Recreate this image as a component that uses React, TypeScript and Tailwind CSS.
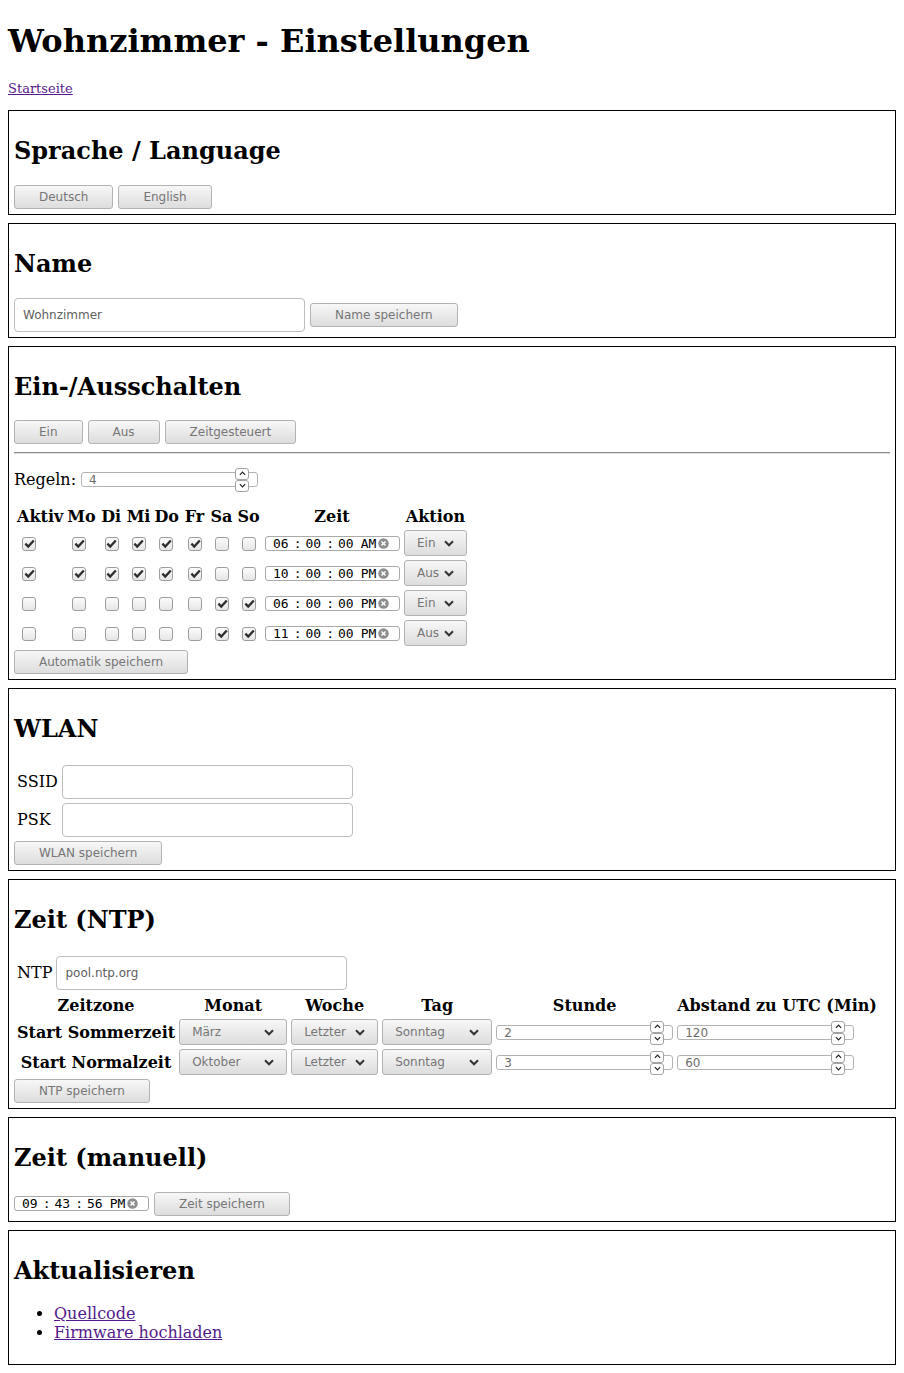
import React from "react";

const ctl = "font-['DejaVu_Sans',sans-serif] text-[12px]";

const Btn = ({ children }: { children: React.ReactNode }) => (
  <button
    className={`h-[24px] shrink-0 rounded-[3px] border border-[#b3b3b3] bg-linear-to-b from-[#f7f7f7] to-[#dddddd] px-[24px] leading-none text-[#767676] ${ctl}`}
  >
    {children}
  </button>
);

const TextInput = ({ value = "", className = "" }: { value?: string; className?: string }) => (
  <input
    readOnly
    defaultValue={value}
    className={`h-[34px] w-[291px] rounded-[4px] border border-[#bdbdbd] bg-white px-2 text-[#606060] outline-none ${ctl} ${className}`}
  />
);

const Check = ({ on }: { on: boolean }) => (
  <span className="ml-[5px] mr-[4px] inline-flex h-[14px] w-[14px] items-center justify-center rounded-[3px] border border-[#9d9d9d] bg-linear-to-b from-[#fbfbfb] to-[#e6e6e6] align-middle">
    {on && (
      <svg viewBox="0 0 12 12" width="11" height="11">
        <path d="M1.5 6.2 L4.6 9.3 L10.7 2.7" stroke="#2d2d2d" strokeWidth="2.5" fill="none" />
      </svg>
    )}
  </span>
);

const ClearIcon = () => (
  <svg viewBox="0 0 12 12" width="11" height="11" className="ml-[2px] shrink-0">
    <circle cx="6" cy="6" r="5.7" fill="#8d8d8d" />
    <path d="M3.8 3.8 L8.2 8.2 M8.2 3.8 L3.8 8.2" stroke="#ffffff" strokeWidth="1.6" />
  </svg>
);

const TimeInput = ({ t }: { t: [string, string, string, string] }) => (
  <span className="inline-flex h-[15px] w-[135px] items-center rounded-[3px] border border-[#a9a9a9] bg-white pl-[7px] align-middle font-['DejaVu_Sans_Mono',monospace] text-[13px] leading-none text-black">
    <span>{t[0]}</span>
    <span className="ml-[5px]">:</span>
    <span className="ml-[4px]">{t[1]}</span>
    <span className="ml-[5px]">:</span>
    <span className="ml-[4px]">{t[2]}</span>
    <span className="ml-[7px]">{t[3]}</span>
    <ClearIcon />
  </span>
);

const Chevron = () => (
  <svg viewBox="0 0 10 7" width="10" height="7" className="shrink-0">
    <path d="M1 1.3 L5 5.3 L9 1.3" stroke="#333333" strokeWidth="2" fill="none" />
  </svg>
);

const Select = ({ value, w }: { value: string; w: string }) => (
  <span
    className={`inline-flex h-[26px] ${w} items-center justify-between rounded-[3px] border border-[#b3b3b3] bg-linear-to-b from-[#f7f7f7] to-[#dddddd] pl-[12px] pr-[12px] align-middle text-[#767676] ${ctl}`}
  >
    <span>{value}</span>
    <Chevron />
  </span>
);

const SpinBtn = ({ up }: { up: boolean }) => (
  <span className="flex h-[12px] w-[14px] items-center justify-center rounded-[3px] border border-[#a3a3a3] bg-white">
    <svg viewBox="0 0 8 5" width="7" height="5">
      <path d={up ? "M1 4 L4 1 L7 4" : "M1 1 L4 4 L7 1"} stroke="#222222" strokeWidth="1.4" fill="none" />
    </svg>
  </span>
);

const NumInput = ({ value }: { value: string }) => (
  <span
    className={`relative inline-flex h-[15px] w-[177px] items-center rounded-[3px] border border-[#b3b3b3] bg-white pl-[7px] align-middle leading-none text-[#6d6d6d] ${ctl}`}
  >
    {value}
    <span className="absolute right-[8px] top-1/2 flex -translate-y-1/2 flex-col">
      <SpinBtn up />
      <SpinBtn up={false} />
    </span>
  </span>
);

const Section = ({ title, children }: { title: string; children: React.ReactNode }) => (
  <div className="mt-2 border border-black p-[5px] first:mt-[14px]">
    <h2 className="mb-[19px] mt-[21px] text-[24px] font-bold leading-[28px]">{title}</h2>
    {children}
  </div>
);

const rules: { active: boolean; days: boolean[]; time: [string, string, string, string]; action: string }[] = [
  { active: true, days: [true, true, true, true, true, false, false], time: ["06", "00", "00", "AM"], action: "Ein" },
  { active: true, days: [true, true, true, true, true, false, false], time: ["10", "00", "00", "PM"], action: "Aus" },
  { active: false, days: [false, false, false, false, false, true, true], time: ["06", "00", "00", "PM"], action: "Ein" },
  { active: false, days: [false, false, false, false, false, true, true], time: ["11", "00", "00", "PM"], action: "Aus" },
];

const dayNames = ["Mo", "Di", "Mi", "Do", "Fr", "Sa", "So"];

const zones = [
  { name: "Start Sommerzeit", month: "März", hour: "2", offset: "120" },
  { name: "Start Normalzeit", month: "Oktober", hour: "3", offset: "60" },
];

const th = "p-[1px] text-center font-bold leading-[19px]";

export default function App() {
  return (
    <div className="min-h-[1373px] px-2 pb-2 font-['DejaVu_Serif',serif] text-[16px] text-black">
      <h1 className="pt-[23px] text-[32px] font-bold leading-[37px]">Wohnzimmer - Einstellungen</h1>
      <div className="mt-[21px] text-[13px] leading-[15px]">
        <a href="#" className="text-[#551a8b] underline">Startseite</a>
      </div>

      <div className="flex flex-col">
        <Section title="Sprache / Language">
          <div className="flex h-[25px] items-center gap-[5px]">
            <Btn>Deutsch</Btn>
            <Btn>English</Btn>
          </div>
        </Section>

        <Section title="Name">
          <div className="flex h-[35px] items-center gap-[5px]">
            <TextInput value="Wohnzimmer" />
            <Btn>Name speichern</Btn>
          </div>
        </Section>

        <Section title="Ein-/Ausschalten">
          <div className="flex h-[24px] items-center gap-[5px]">
            <Btn>Ein</Btn>
            <Btn>Aus</Btn>
            <Btn>Zeitgesteuert</Btn>
          </div>
          <hr className="mt-2 border-t border-b border-t-[#8a8a8a] border-b-[#e2e2e2]" />
          <div className="mb-[15px] mt-4 flex h-[19px] items-center gap-[5px]">
            <span>Regeln:</span>
            <NumInput value="4" />
          </div>
          <table className="border-separate border-spacing-[2px]">
            <thead>
              <tr>
                <th className={th}>Aktiv</th>
                {dayNames.map((d) => (
                  <th key={d} className={th}>{d}</th>
                ))}
                <th className={th}>Zeit</th>
                <th className={th}>Aktion</th>
              </tr>
            </thead>
            <tbody>
              {rules.map((r, i) => (
                <tr key={i}>
                  <td className="p-[1px]"><Check on={r.active} /></td>
                  {r.days.map((d, j) => (
                    <td key={j} className="p-[1px]"><Check on={d} /></td>
                  ))}
                  <td className="p-[1px] pl-[2px]"><TimeInput t={r.time} /></td>
                  <td className="p-[1px]"><Select value={r.action} w="w-[63px]" /></td>
                </tr>
              ))}
            </tbody>
          </table>
          <div className="flex h-[25px] items-center">
            <Btn>Automatik speichern</Btn>
          </div>
        </Section>

        <Section title="WLAN">
          <table className="border-separate border-spacing-[2px]">
            <tbody>
              <tr>
                <td className="p-[1px]">SSID</td>
                <td className="p-[1px]"><TextInput /></td>
              </tr>
              <tr>
                <td className="p-[1px]">PSK</td>
                <td className="p-[1px]"><TextInput /></td>
              </tr>
            </tbody>
          </table>
          <div className="flex h-[25px] items-center">
            <Btn>WLAN speichern</Btn>
          </div>
        </Section>

        <Section title="Zeit (NTP)">
          <table className="border-separate border-spacing-[2px]">
            <tbody>
              <tr>
                <td className="p-[1px]">NTP</td>
                <td className="p-[1px]"><TextInput value="pool.ntp.org" /></td>
              </tr>
            </tbody>
          </table>
          <table className="border-separate border-spacing-[2px]">
            <thead>
              <tr>
                <th className={th}>Zeitzone</th>
                <th className={th}>Monat</th>
                <th className={th}>Woche</th>
                <th className={th}>Tag</th>
                <th className={th}>Stunde</th>
                <th className={th}>Abstand zu UTC (Min)</th>
              </tr>
            </thead>
            <tbody>
              {zones.map((z) => (
                <tr key={z.name}>
                  <th className={th}>{z.name}</th>
                  <td className="p-[1px]"><Select value={z.month} w="w-[108px]" /></td>
                  <td className="p-[1px]"><Select value="Letzter" w="w-[87px]" /></td>
                  <td className="p-[1px]"><Select value="Sonntag" w="w-[110px]" /></td>
                  <td className="p-[1px]"><NumInput value={z.hour} /></td>
                  <td className="p-[1px]"><NumInput value={z.offset} /></td>
                </tr>
              ))}
            </tbody>
          </table>
          <div className="flex h-[25px] items-center">
            <Btn>NTP speichern</Btn>
          </div>
        </Section>

        <Section title="Zeit (manuell)">
          <div className="flex h-[25px] items-center gap-[5px]">
            <TimeInput t={["09", "43", "56", "PM"]} />
            <Btn>Zeit speichern</Btn>
          </div>
        </Section>

        <Section title="Aktualisieren">
          <ul className="mb-[17px] list-disc pl-10 leading-[19px]">
            <li>
              <a href="#" className="text-[#551a8b] underline">Quellcode</a>
            </li>
            <li>
              <a href="#" className="text-[#551a8b] underline">Firmware hochladen</a>
            </li>
          </ul>
        </Section>
      </div>
    </div>
  );
}
